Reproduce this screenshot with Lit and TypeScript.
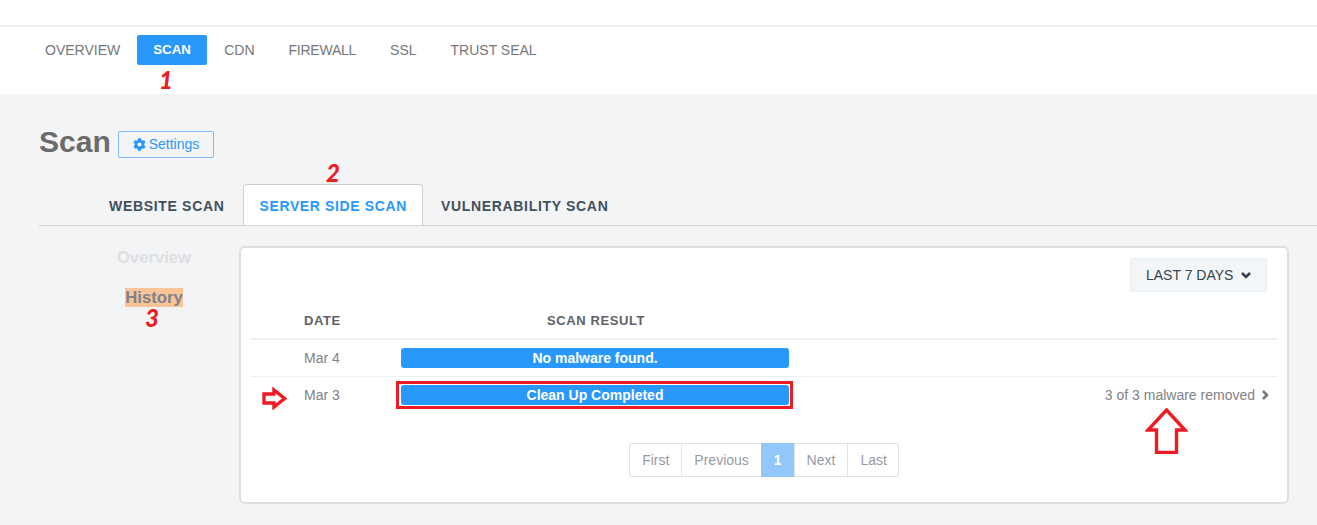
import { LitElement, html, css, svg } from "lit";
import { customElement } from "lit/decorators.js";

const GEAR =
  "M487.4 315.7l-42.6-24.6c4.3-23.2 4.3-47 0-70.2l42.6-24.6c4.9-2.8 7.1-8.6 5.5-14-11.1-35.6-30-67.8-54.7-94.6-3.8-4.1-10-5.1-14.8-2.3L380.8 110c-17.9-15.4-38.5-27.3-60.8-35.1V25.8c0-5.6-3.9-10.5-9.4-11.7-36.7-8.2-74.3-7.8-109.2 0-5.5 1.2-9.4 6.1-9.4 11.7V75c-22.2 7.9-42.8 19.8-60.8 35.1L88.7 85.5c-4.9-2.8-11-1.9-14.8 2.3-24.7 26.7-43.6 58.9-54.7 94.6-1.7 5.4.6 11.2 5.5 14L67.3 221c-4.3 23.2-4.3 47 0 70.2l-42.6 24.6c-4.9 2.8-7.1 8.6-5.5 14 11.1 35.6 30 67.8 54.7 94.6 3.8 4.1 10 5.1 14.8 2.3l42.6-24.6c17.9 15.4 38.5 27.3 60.8 35.1v49.2c0 5.6 3.9 10.5 9.4 11.7 36.7 8.2 74.3 7.8 109.2 0 5.5-1.2 9.4-6.1 9.4-11.7v-49.2c22.2-7.9 42.8-19.8 60.8-35.1l42.6 24.6c4.9 2.8 11 1.9 14.8-2.3 24.7-26.7 43.6-58.9 54.7-94.6 1.5-5.5-.7-11.3-5.6-14.1zM256 336c-44.1 0-80-35.9-80-80s35.9-80 80-80 80 35.9 80 80-35.9 80-80 80z";

const navItems = ["OVERVIEW", "SCAN", "CDN", "FIREWALL", "SSL", "TRUST SEAL"];
const tabs = ["WEBSITE SCAN", "SERVER SIDE SCAN", "VULNERABILITY SCAN"];
const pages = ["First", "Previous", "1", "Next", "Last"];

const navClass = (n: string) =>
  n === "SCAN" ? "on" : n === "FIREWALL" ? "tight" : "";

@customElement("app-root")
export class AppRoot extends LitElement {
  static styles = css`
    :host {
      display: block;
      position: relative;
      width: 1317px;
      height: 525px;
      overflow: hidden;
      background: #f3f4f6;
      font-family: "Liberation Sans", Arial, sans-serif;
      font-size: 14px;
    }

    .topbar {
      height: 25px;
      background: #fff;
      border-bottom: 2px solid #efefef;
    }

    .nav {
      display: flex;
      align-items: flex-start;
      height: 67px;
      box-sizing: border-box;
      padding: 8px 0 0 28px;
      background: #fff;
    }

    .nav a {
      height: 30px;
      line-height: 30px;
      padding: 0 17px;
      color: #75777b;
      font-size: 14px;
      border-radius: 2px;
    }

    .nav a.tight {
      letter-spacing: -0.25px;
    }

    .nav a.on {
      background: #2898fd;
      color: #fff;
      font-size: 13.3px;
      font-weight: 700;
      padding: 0 16px;
      width: 38px;
    }

    .head {
      display: flex;
      align-items: center;
      gap: 7px;
      padding: 30px 0 0 39px;
      height: 36px;
    }

    .head h1 {
      margin: 0;
      font-size: 30px;
      line-height: 36px;
      font-weight: 700;
      color: #6b6b6b;
    }

    .settings {
      display: flex;
      align-items: center;
      gap: 3px;
      box-sizing: border-box;
      width: 96px;
      height: 27px;
      margin-top: 4px;
      padding-left: 14px;
      border: 1px solid #7fbcf8;
      border-radius: 2px;
      color: #2898fd;
    }

    .settings svg {
      width: 13px;
      height: 13px;
      fill: #2898fd;
    }

    .tabs {
      display: flex;
      box-sizing: border-box;
      height: 42px;
      margin: 24px 0 0 39px;
      padding-left: 52px;
      border-bottom: 1px solid #d2d4d6;
    }

    .tabs div {
      box-sizing: border-box;
      height: 41px;
      line-height: 42px;
      padding: 0 16px 0 17px;
      font-weight: 700;
      font-size: 14px;
      letter-spacing: 0.68px;
      color: #40505c;
      border: 1px solid transparent;
      border-bottom: 0;
    }

    .tabs div:first-child {
      padding-right: 17px;
    }

    .tabs div.on {
      background: #fff;
      color: #2898fd;
      border-color: #ccced0;
      border-radius: 4px 4px 0 0;
      padding: 0 15px 0 16px;
      letter-spacing: 0.62px;
    }

    .body {
      display: flex;
      margin: 20px 28px 0 39px;
    }

    .side {
      width: 200px;
      display: flex;
      flex-direction: column;
      align-items: center;
      box-sizing: border-box;
      padding: 2px 0 0 30px;
      gap: 21px;
      font-size: 16.7px;
      font-weight: 700;
    }

    .side span {
      color: #dedfe1;
      line-height: 19px;
    }

    .side span.on {
      color: #7f8288;
      background: #f8c498;
    }

    .card {
      box-sizing: border-box;
      width: 1050px;
      height: 258px;
      padding: 10px 10px 0 10px;
      background: #fff;
      border: 2px solid #dedede;
      border-radius: 6px;
    }

    .filter-row {
      display: flex;
      justify-content: flex-end;
      padding-right: 10px;
    }

    .filter {
      display: flex;
      align-items: center;
      gap: 8px;
      box-sizing: border-box;
      width: 137px;
      height: 34px;
      padding-left: 15px;
      background: #f2f6f8;
      border: 1px solid #e8eef1;
      border-radius: 2px;
      color: #37424c;
    }

    .filter svg,
    .more svg {
      width: 10px;
      height: 10px;
      fill: none;
      stroke-width: 2.6;
    }

    .filter svg {
      stroke: #37424c;
    }

    .more svg {
      stroke: #77797d;
    }

    .row {
      display: grid;
      grid-template-columns: 53px 97px 388px 1fr;
      align-items: center;
      box-sizing: border-box;
      height: 37px;
      border-bottom: 1px solid #eef1f3;
      color: #808285;
    }

    .row.header {
      margin-top: 11px;
      height: 37px;
      border-bottom: 2px solid #edf0f3;
      font-size: 13px;
      font-weight: 700;
      letter-spacing: 0.6px;
      color: #5f6266;
    }

    .row.last {
      height: 36px;
      border-bottom: 0;
    }

    .row .date {
      grid-column: 2;
    }

    .row .title {
      text-align: center;
      padding-left: 2px;
    }

    .bar {
      position: relative;
      height: 20px;
      line-height: 20px;
      text-align: center;
      background: #2898fd;
      border-radius: 3px;
      color: #fff;
      font-weight: 700;
    }

    /* red box from the annotation layer */
    .bar.marked::after {
      content: "";
      position: absolute;
      inset: -4px -4px -4px -5px;
      border: 3px solid #ed1c24;
    }

    .more {
      display: flex;
      justify-content: flex-end;
      align-items: center;
      gap: 5px;
      padding-right: 7px;
      color: #808285;
    }

    .pager {
      display: flex;
      justify-content: center;
      margin-top: 30px;
      padding-left: 1px;
    }

    .pager span {
      box-sizing: border-box;
      height: 34px;
      line-height: 32px;
      padding: 0 12px;
      background: #fff;
      border: 1px solid #e2e3e5;
      margin-left: -1px;
      color: #969ba4;
    }

    .pager span:first-child {
      border-radius: 3px 0 0 3px;
    }

    .pager span:last-child {
      padding-right: 11px;
      border-radius: 0 3px 3px 0;
    }

    .pager span.on {
      background: #93c6fb;
      border-color: #93c6fb;
      color: #fff;
      font-weight: 700;
    }

    /* red annotations drawn over the page */
    .mark {
      position: absolute;
      color: #ed1c24;
      font-family: Lato, "Open Sans", sans-serif;
      font-size: 24px;
      line-height: 18px;
      font-weight: 900;
      font-style: italic;
    }

    .m1 {
      left: 159px;
      top: 71px;
    }

    .m2 {
      left: 326px;
      top: 164px;
    }

    .m3 {
      left: 145px;
      top: 309px;
    }

    .arrow {
      position: absolute;
      fill: #fff;
      stroke: #ed1c24;
      stroke-width: 3.4;
    }

    .a-right {
      left: 262px;
      top: 387px;
      width: 25px;
      height: 23px;
    }

    .a-up {
      left: 1145px;
      top: 408px;
      width: 43px;
      height: 46px;
    }
  `;

  render() {
    return html`
      <div class="topbar"></div>
      <nav class="nav">
        ${navItems.map((n) => html`<a class=${navClass(n)}>${n}</a>`)}
      </nav>
      <div class="head">
        <h1>Scan</h1>
        <div class="settings">
          <svg viewBox="0 0 512 512"><path d=${GEAR}></path></svg>
          Settings
        </div>
      </div>
      <div class="tabs">
        ${tabs.map(
          (t) =>
            html`<div class=${t === "SERVER SIDE SCAN" ? "on" : ""}>${t}</div>`
        )}
      </div>
      <div class="body">
        <div class="side">
          <span>Overview</span>
          <span class="on">History</span>
        </div>
        <div class="card">
          <div class="filter-row">
            <div class="filter">
              LAST 7 DAYS
              <svg viewBox="0 0 10 10">
                <polyline points="1,3 5,7 9,3"></polyline>
              </svg>
            </div>
          </div>
          <div class="row header">
            <span class="date">DATE</span>
            <span class="title">SCAN RESULT</span>
          </div>
          <div class="row">
            <span class="date">Mar 4</span>
            <div class="bar">No malware found.</div>
          </div>
          <div class="row last">
            <span class="date">Mar 3</span>
            <div class="bar marked">Clean Up Completed</div>
            <div class="more">
              3 of 3 malware removed
              <svg viewBox="0 0 10 10">
                <polyline points="3,1 7,5 3,9"></polyline>
              </svg>
            </div>
          </div>
          <div class="pager">
            ${pages.map(
              (p) => html`<span class=${p === "1" ? "on" : ""}>${p}</span>`
            )}
          </div>
        </div>
      </div>

      <span class="mark m1">1</span>
      <span class="mark m2">2</span>
      <span class="mark m3">3</span>
      <svg class="arrow a-right" viewBox="0 0 25 23">
        ${svg`<polygon points="2,7 12,7 12,3 22.5,11.5 12,20 12,16 2,16"></polygon>`}
      </svg>
      <svg class="arrow a-up" viewBox="0 0 43 46">
        ${svg`<polygon points="21.5,2 40,22 31.5,22 31.5,44.5 11.5,44.5 11.5,22 3,22"></polygon>`}
      </svg>
    `;
  }
}
